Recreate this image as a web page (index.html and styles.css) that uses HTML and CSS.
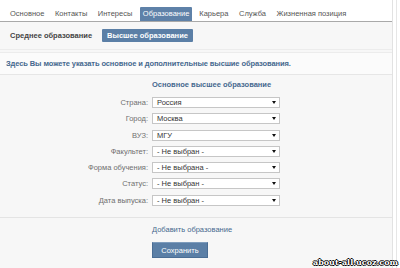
FILE: index.html
```html
<!DOCTYPE html>
<html lang="ru">
<head>
    <meta charset="UTF-8">
    <title>Образование</title>
    <link rel="stylesheet" href="styles.css">
</head>
<body>
    <div class="page">
        <ul class="tabs">
            <li>Основное</li>
            <li>Контакты</li>
            <li>Интересы</li>
            <li class="active">Образование</li>
            <li>Карьера</li>
            <li>Служба</li>
            <li>Жизненная позиция</li>
        </ul>
        <div class="subtabs">
            <span class="subtab">Среднее образование</span>
            <span class="subtab active">Высшее образование</span>
        </div>
        <div class="info">Здесь Вы можете указать основное и дополнительные высшие образования.</div>
        <div class="edu">
            <div class="edu-title">Основное высшее образование</div>
            <div class="rows">
                <label>Страна:</label><div class="select">Россия</div>
                <label>Город:</label><div class="select">Москва</div>
                <label>ВУЗ:</label><div class="select">МГУ</div>
                <label>Факультет:</label><div class="select">- Не выбран -</div>
                <label>Форма обучения:</label><div class="select">- Не выбрана -</div>
                <label>Статус:</label><div class="select">- Не выбран -</div>
                <label>Дата выпуска:</label><div class="select">- Не выбран -</div>
            </div>
        </div>
        <div class="actions">
            <a class="add" href="#">Добавить образование</a>
            <button class="save" type="button">Сохранить</button>
        </div>
    </div>
    <div class="watermark">about-all.ucoz.com</div>
</body>
</html>
```

FILE: styles.css
```css
body, html {
    margin: 0;
    padding: 0;
}
body {
    width: 400px;
    height: 268px;
    overflow: hidden;
    background: #fff;
    font-family: "Liberation Sans", Arial, sans-serif;
    font-size: 7.5px;
    color: #333;
    position: relative;
}
.page {
    width: 392px;
    height: 268px;
    background: #f7f7f7;
    border-right: 1px solid #e2e2e2;
    box-shadow: 3px 0 0 #fff, 4px 0 0 #e6e6e6;
}
.tabs {
    list-style: none;
    margin: 0;
    padding: 7px 0 0 5px;
    height: 14px;
    display: flex;
    background: #fff;
    border-bottom: 1px solid #a9a9a9;
}
.tabs li {
    padding: 0 5px;
    margin-right: 0.5px;
    line-height: 14px;
    color: #555;
}
.tabs li.active {
    background: #5e81a8;
    color: #fff;
    padding: 0 3px;
    margin: 0 2px 0 2px;
    border-radius: 1px 1px 0 0;
}
.subtabs {
    display: flex;
    align-items: center;
    gap: 10px;
    height: 27px;
    padding: 0 0 0 10px;
    border-bottom: 1px solid #ececec;
}
.subtab {
    font-weight: bold;
    color: #444;
}
.subtab.active {
    background: #5b7fa6;
    color: #fff;
    padding: 0 5px;
    line-height: 13px;
    border-radius: 1px;
}
.info {
    margin-top: 2px;
    height: 21px;
    line-height: 21px;
    padding-left: 6px;
    background: #fbfbfb;
    border-top: 1px solid #ececec;
    border-bottom: 1px solid #e6e6e6;
    color: #45688e;
    font-weight: bold;
    letter-spacing: -0.1px;
}
.edu {
    height: 142px;
    border-bottom: 1px solid #e4e4e4;
}
.edu-title {
    padding: 4px 0 0 152px;
    line-height: 12px;
    font-weight: bold;
    color: #45688e;
}
.rows {
    display: grid;
    grid-template-columns: 148px 128px;
    grid-auto-rows: 11px;
    column-gap: 4px;
    row-gap: 5.25px;
    padding-top: 6px;
}
.rows label {
    text-align: right;
    line-height: 11px;
    color: #6f6f6f;
}
.select {
    position: relative;
    line-height: 9px;
    padding: 0 0 0 4px;
    background: #fff;
    border: 1px solid #c6c6c6;
    color: #333;
}
.select::after {
    content: "";
    position: absolute;
    right: 3px;
    top: 3px;
    border-left: 2.5px solid transparent;
    border-right: 2.5px solid transparent;
    border-top: 3px solid #111;
}
.actions {
    padding: 7px 0 0 152px;
    display: flex;
    flex-direction: column;
    align-items: flex-start;
}
.add {
    color: #45688e;
    text-decoration: none;
    line-height: 10px;
}
.save {
    margin-top: 7px;
    width: 56px;
    height: 16px;
    padding: 0;
    font-family: "Liberation Sans", Arial, sans-serif;
    font-size: 7.5px;
    color: #fff;
    background: #5b7fa6;
    border: 1px solid #4a6d94;
    border-top-color: #7e9cbc;
}
.watermark {
    position: absolute;
    right: 2px;
    bottom: 1px;
    font-family: "DejaVu Serif", serif;
    font-size: 8px;
    font-weight: bold;
    color: #fff;
    text-shadow: 1px 0 0 #000, -1px 0 0 #000, 0 1px 0 #000, 0 -1px 0 #000;
}
```
